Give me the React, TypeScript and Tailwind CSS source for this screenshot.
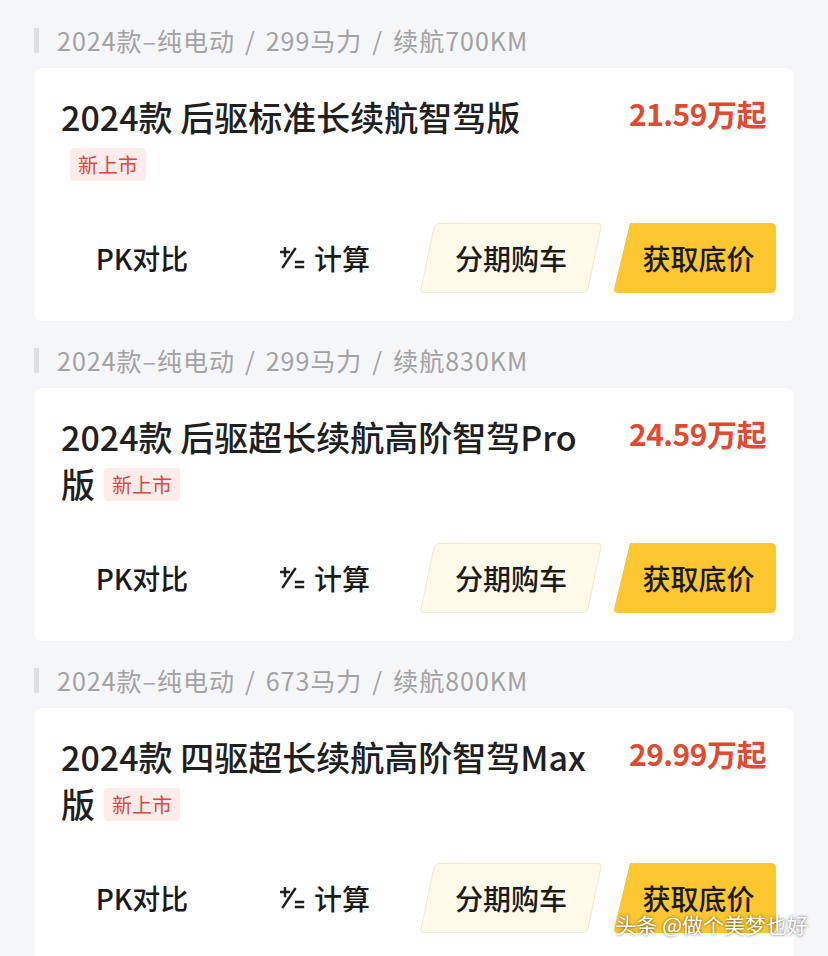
import React from "react";

type Trim = {
  spec: string[];
  name: string;
  price: string;
};

const trims: Trim[] = [
  { spec: ["2024款–纯电动", "299马力", "续航700KM"], name: "2024款 后驱标准长续航智驾版", price: "21.59万起" },
  { spec: ["2024款–纯电动", "299马力", "续航830KM"], name: "2024款 后驱超长续航高阶智驾Pro版", price: "24.59万起" },
  { spec: ["2024款–纯电动", "673马力", "续航800KM"], name: "2024款 四驱超长续航高阶智驾Max版", price: "29.99万起" },
];

const font = { fontFamily: '"Noto Sans CJK SC", "Noto Sans", sans-serif' };

function CalcIcon() {
  return (
    <svg width="26" height="22" viewBox="0 0 26 22" fill="none" stroke="#1f1f1f" strokeWidth="2.4" strokeLinecap="square">
      <path d="M1 5h8M5 1v8" />
      <path d="M3 20L15 2" />
      <path d="M16 15h7M16 20h7" />
    </svg>
  );
}

function Card({ trim }: { trim: Trim }) {
  return (
    <div className="bg-white rounded-lg h-[253px] flex flex-col justify-between pl-[27px] pr-[18px] pt-[25px] pb-[28px]">
      <div className="flex items-start justify-between pr-[10px]">
        <div className="w-[535px] text-[34px] leading-[47px] text-[#202020] font-medium">
          {trim.name}
          <span className="inline-block align-[5px] ml-[9px] px-[8px] h-[33px] leading-[33px] rounded-[4px] bg-[#fdeceb] text-[#d8493c] text-[20px] font-normal">
            新上市
          </span>
        </div>
        <div className="text-[30px] leading-[40px] font-bold text-[#df4a30] tracking-[-0.5px]">{trim.price}</div>
      </div>

      <div className="flex items-center gap-[18px] h-[70px] text-[28px] font-medium text-[#1a1a1a]">
        <div className="w-[162px] h-full flex items-center justify-center">PK对比</div>
        <div className="w-[168px] h-full flex items-center justify-center gap-[8px]">
          <CalcIcon />
          <span>计算</span>
        </div>
        <div className="w-[168px] h-full -skew-x-12 rounded-[5px] border border-[#efe8cc] bg-[#fdfaea] flex items-center justify-center">
          <span className="skew-x-12">分期购车</span>
        </div>
        <div className="w-[163px] h-full rounded-[5px] bg-[#fcc730] [clip-path:polygon(17px_0,100%_0,100%_100%,0_100%)] flex items-center justify-center pl-[8px]">
          获取底价
        </div>
      </div>
    </div>
  );
}

export default function App() {
  return (
    <div className="relative w-[828px] h-[956px] overflow-hidden bg-[#f5f6f8]" style={font}>
      <div className="pt-[24px] px-[34px] flex flex-col gap-[23px]">
        {trims.map((t) => (
          <section key={t.price}>
            <div className="h-[32px] mb-[12px] flex items-center">
              <div className="w-[5px] h-[25px] bg-[#dedfe1] mr-[18px]" />
              <div className="flex items-center text-[25px] text-[#a2a2a2] leading-[32px] tracking-[1px]">
                {t.spec.map((s, i) => (
                  <React.Fragment key={s}>
                    {i > 0 && <span className="mx-[10px]">/</span>}
                    <span>{s}</span>
                  </React.Fragment>
                ))}
              </div>
            </div>
            <Card trim={t} />
          </section>
        ))}
      </div>

      <div className="absolute right-[20px] bottom-[16px] text-[21px] text-white [text-shadow:0_0_3px_rgba(0,0,0,0.7)]">
        头条 @做个美梦也好
      </div>
    </div>
  );
}
